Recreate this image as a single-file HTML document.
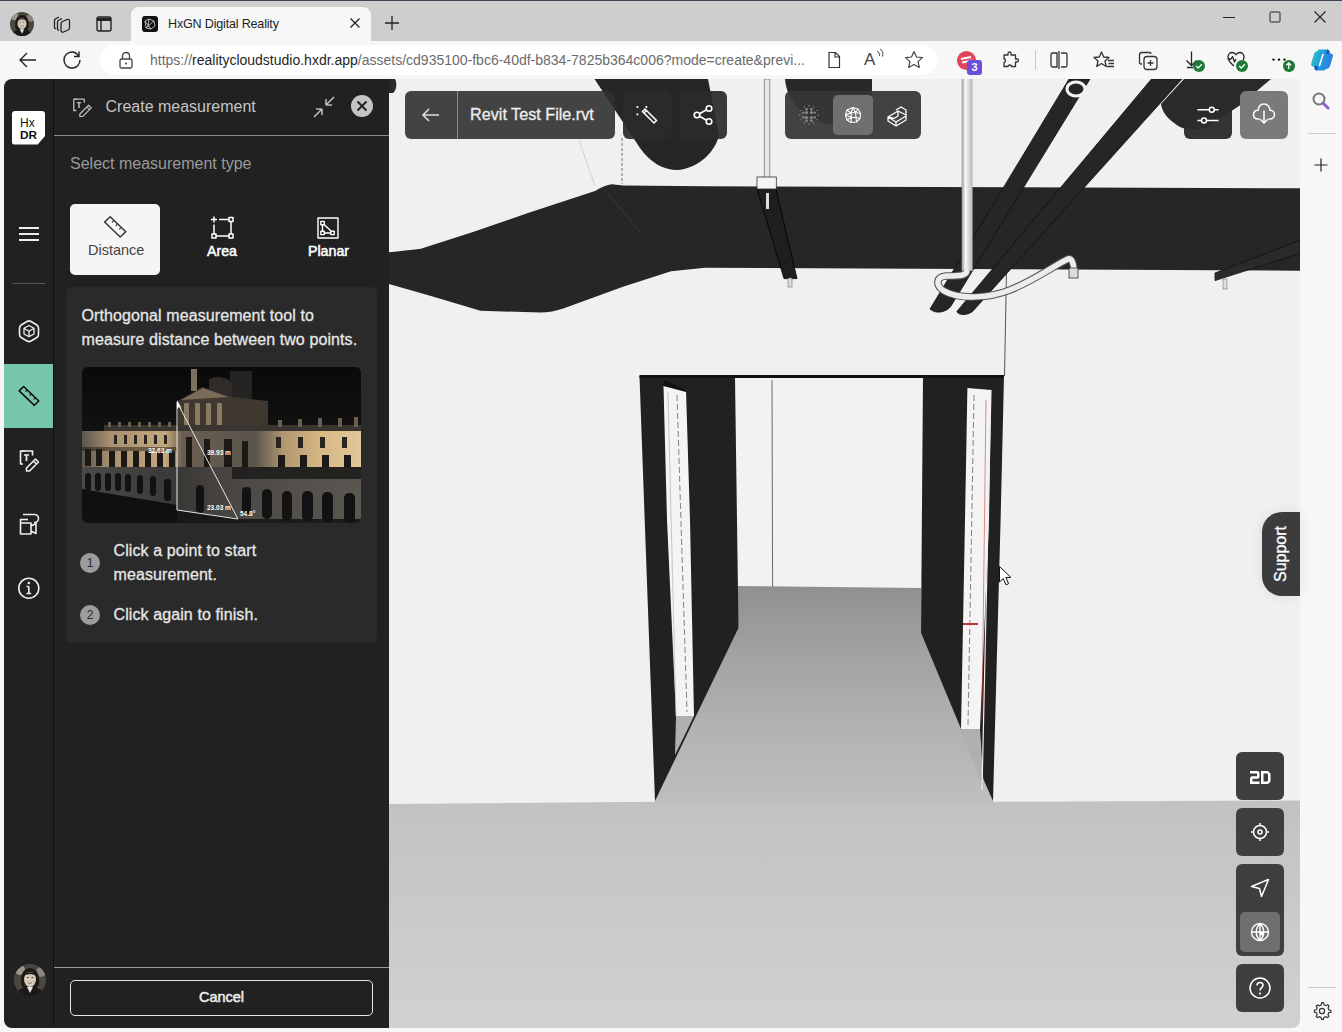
<!DOCTYPE html>
<html><head><meta charset="utf-8">
<style>
*{margin:0;padding:0;box-sizing:border-box}
html,body{width:1342px;height:1032px;overflow:hidden;background:#f7f7f7;font-family:"Liberation Sans",sans-serif}
.a{position:absolute}
#tabbar{left:0;top:0;width:1342px;height:41px;background:#cecece;border-top:1px solid #3b4754}
#tab{left:131px;top:7px;width:240px;height:40px;background:#f7f7f7;border-radius:8px 8px 0 0}
#addr{left:0;top:41px;width:1342px;height:38px;background:#f7f7f7}
#url{left:100px;top:45px;width:837px;height:30px;background:#fff;border-radius:15px}
.ut{font-size:14px;color:#6b6b6b;white-space:nowrap}
#panel{left:4px;top:79px;width:385px;height:949px;background:#212121;border-radius:8px 0 0 8px;overflow:hidden}
#side{left:0;top:0;width:50px;height:948px;border-right:1px solid #111}
#vp{left:389px;top:79px;width:911px;height:949px;background:#f0f0f0;border-radius:0 8px 8px 0;overflow:hidden}
#rs{left:1300px;top:79px;width:42px;height:953px;background:#f7f7f7}
.btn{background:rgba(42,42,42,.92);border-radius:6px}
.w{color:#fff}
.med{-webkit-text-stroke:0.3px currentColor}
</style></head><body>
<div id="tabbar" class="a"></div>
<div id="tab" class="a"></div>
<div id="addr" class="a"></div>
<div id="url" class="a"></div>
<div class="a ut" style="left:150px;top:52px">https://<span style="color:#1f1f1f">realitycloudstudio.hxdr.app</span>/assets/cd935100-fbc6-40df-b834-7825b364c006?mode=create&amp;previ...</div>
<div class="a" style="left:168px;top:16.5px;font-size:12.6px;color:#1f1f1f;letter-spacing:-0.2px">HxGN Digital Reality</div>
<!-- chrome icons -->
<svg class="a" style="left:10px;top:12px" width="24" height="24" viewBox="0 0 32 32"><defs><clipPath id="av2"><circle cx="16" cy="16" r="16"/></clipPath></defs><g clip-path="url(#av2)"><rect width="32" height="32" fill="#4a4640"/><circle cx="6" cy="6" r="5" fill="#9a958e"/><circle cx="27" cy="8" r="5" fill="#8a857e"/><path d="M7,20 C6,10 10,4 16,4 C22,4 26,10 25,20 L23,24 L9,24 Z" fill="#1e1a16"/><ellipse cx="16" cy="15.5" rx="6" ry="7.5" fill="#d6c9ba"/><path d="M9.5,12 C11,7 21,7 22.5,12 C20,9.5 12,9.5 9.5,12 Z" fill="#1e1a16"/><path d="M2,32 C3,25 9,23 16,23 C23,23 29,25 30,32 Z" fill="#1a1816"/><path d="M13,23 L16,29 L19,23 Z" fill="#e8e4de"/><path d="M13,13.5 L14.5,13.5 M17.5,13.5 L19,13.5" stroke="#3a302a" stroke-width="1"/><path d="M14,18.5 C15,19.5 17,19.5 18,18.5" stroke="#8a6a5a" stroke-width=".9" fill="none"/></g></svg>
<svg class="a" style="left:50px;top:12px" width="24" height="24" viewBox="0 0 24 24"><g fill="none" stroke="#222" stroke-width="1.3" stroke-linejoin="round"><path d="M6,17 L4.5,16 L4.5,8.5 C4.5,7.5 5,7 6,6.5 L9,5"/><path d="M9,18.5 L7.5,17.5 L7.5,10 C7.5,9 8,8.5 9,8 L12,6.5"/><path d="M11,11.5 C11,10.5 11.5,10 12.5,9.5 L17,7.5 C18.5,7 19.5,7.5 19.5,9 L19.5,16 C19.5,17 19,17.7 18,18 L13.5,20 C12,20.5 11,20 11,18.5 Z"/></g></svg>
<svg class="a" style="left:92px;top:12px" width="24" height="24" viewBox="0 0 24 24"><g fill="none" stroke="#222" stroke-width="1.4"><rect x="5" y="5" width="14" height="14" rx="2"/><path d="M5,7.5 L19,7.5" stroke-width="3"/><path d="M9,8 L9,19"/></g></svg>
<div class="a" style="left:142px;top:16px;width:16px;height:16px;background:#111;border-radius:3px"></div>
<svg class="a" style="left:142px;top:16px" width="16" height="16" viewBox="0 0 16 16"><g fill="none" stroke="#ddd" stroke-width=".8"><path d="M3,5 L7,3 L12,5 L13,10 L9,13 L4,12 Z M3,5 L9,13 M7,3 L6,11 M12,5 L4,12"/></g></svg>
<svg class="a" style="left:347px;top:15px" width="16" height="16" viewBox="0 0 16 16"><path d="M3.5,3.5 L12.5,12.5 M12.5,3.5 L3.5,12.5" stroke="#222" stroke-width="1.3"/></svg>
<svg class="a" style="left:383px;top:14px" width="18" height="18" viewBox="0 0 18 18"><path d="M9,2 L9,16 M2,9 L16,9" stroke="#222" stroke-width="1.3"/></svg>
<svg class="a" style="left:1220px;top:10px" width="18" height="16" viewBox="0 0 18 16"><path d="M3,7.5 L15,7.5" stroke="#222" stroke-width="1"/></svg>
<svg class="a" style="left:1266px;top:8px" width="18" height="18" viewBox="0 0 18 18"><rect x="4" y="4" width="10" height="10" rx="1" fill="none" stroke="#222" stroke-width="1"/></svg>
<svg class="a" style="left:1311px;top:8px" width="18" height="18" viewBox="0 0 18 18"><path d="M3.5,3.5 L14.5,14.5 M14.5,3.5 L3.5,14.5" stroke="#222" stroke-width="1.1"/></svg>
<svg class="a" style="left:16px;top:48px" width="24" height="24" viewBox="0 0 24 24"><path d="M20,12 L4,12 M11,5 L4,12 L11,19" fill="none" stroke="#222" stroke-width="1.4"/></svg>
<svg class="a" style="left:60px;top:48px" width="24" height="24" viewBox="0 0 24 24"><path d="M18.5,8 C17,5.5 14.5,4 12,4 C7.5,4 4,7.5 4,12 C4,16.5 7.5,20 12,20 C16.5,20 20,16.5 20,12 M19,3.5 L19,8.5 L14,8.5" fill="none" stroke="#222" stroke-width="1.4"/></svg>
<svg class="a" style="left:116px;top:50px" width="20" height="20" viewBox="0 0 20 20"><g fill="none" stroke="#444" stroke-width="1.3"><rect x="4" y="9" width="12" height="9" rx="1.5"/><path d="M6.5,9 L6.5,6 C6.5,4 8,2.5 10,2.5 C12,2.5 13.5,4 13.5,6 L13.5,9"/></g><circle cx="10" cy="13.5" r="1" fill="#444"/></svg>
<svg class="a" style="left:824px;top:50px" width="20" height="20" viewBox="0 0 20 20"><path d="M5,2.5 L11.5,2.5 L15.5,6.5 L15.5,17.5 L5,17.5 Z M11,2.5 L11,7 L15.5,7" fill="none" stroke="#333" stroke-width="1.2"/></svg>
<div class="a" style="left:864px;top:50px;font-size:17px;color:#444">A</div>
<svg class="a" style="left:874px;top:48px" width="12" height="12" viewBox="0 0 12 12"><path d="M3,3 C5,4 6,6 5.5,8 M6,1 C8.5,2.5 9.5,5.5 8.5,8.5" fill="none" stroke="#444" stroke-width="1"/></svg>
<svg class="a" style="left:903px;top:49px" width="22" height="22" viewBox="0 0 22 22"><path d="M11,2.5 L13.5,8 L19.5,8.6 L15,12.6 L16.3,18.5 L11,15.5 L5.7,18.5 L7,12.6 L2.5,8.6 L8.5,8 Z" fill="none" stroke="#444" stroke-width="1.2" stroke-linejoin="round"/></svg>
<div class="a" style="left:957px;top:51px;width:19px;height:19px;border-radius:50%;background:#e0435a"></div>
<svg class="a" style="left:957px;top:51px" width="19" height="19" viewBox="0 0 19 19"><path d="M4,8 L14,6 M5,11.5 L15,9.5" stroke="#fff" stroke-width="1.8"/></svg>
<div class="a" style="left:967px;top:60px;width:15px;height:15px;border-radius:3px;background:#6b4fd8;color:#fff;font-size:11px;font-weight:bold;text-align:center;line-height:15px">3</div>
<svg class="a" style="left:1000px;top:49px" width="22" height="22" viewBox="0 0 22 22"><path d="M8,4.5 C8,2.5 11,2.5 11,4.5 L11,6 L15.5,6 L15.5,10 L17,10 C19,10 19,13 17,13 L15.5,13 L15.5,17.5 L11.5,17.5 C11.5,15.5 8,15.5 8,17.5 L4,17.5 L4,13.5 C6,13.5 6,10 4,10 L4,6 L8,6 Z" fill="none" stroke="#333" stroke-width="1.3" stroke-linejoin="round"/></svg>
<div class="a" style="left:1035px;top:50px;width:1px;height:20px;background:#c8c8c8"></div>
<svg class="a" style="left:1048px;top:49px" width="22" height="22" viewBox="0 0 22 22"><g fill="none" stroke="#333" stroke-width="1.3"><path d="M9,4 L4.5,4 C3.5,4 3,4.5 3,5.5 L3,16.5 C3,17.5 3.5,18 4.5,18 L9,18 Z M13,4 L17.5,4 C18.5,4 19,4.5 19,5.5 L19,16.5 C19,17.5 18.5,18 17.5,18 L13,18"/><path d="M11,2 L11,20"/></g></svg>
<svg class="a" style="left:1092px;top:49px" width="24" height="22" viewBox="0 0 24 22"><g fill="none" stroke="#333" stroke-width="1.3" stroke-linejoin="round"><path d="M9.5,3 L11.7,8 L17,8.5 L13,12 L14.2,17.5 L9.5,14.5 L4.8,17.5 L6,12 L2,8.5 L7.3,8 Z"/><path d="M16,11.5 L22,11.5 M16.5,14.5 L22,14.5 M15,17.5 L22,17.5"/></g></svg>
<svg class="a" style="left:1137px;top:49px" width="24" height="24" viewBox="0 0 24 24"><g fill="none" stroke="#333" stroke-width="1.3"><path d="M5,15 L4,15 C3,15 2.5,14.5 2.5,13.5 L2.5,6 C2.5,4.5 3.5,3.5 5,3.5 L12.5,3.5 C13.5,3.5 14,4 14,5"/><rect x="7" y="7.5" width="13" height="13" rx="3"/><path d="M13.5,11 L13.5,17 M10.5,14 L16.5,14"/></g></svg>
<svg class="a" style="left:1180px;top:48px" width="24" height="24" viewBox="0 0 24 24"><g fill="none" stroke="#222" stroke-width="1.3"><path d="M11.5,3.5 L11.5,17.5 M6.5,12.5 L11.5,17.5 L16.5,12.5 M7,19.5 L13,19.5"/></g></svg>
<div class="a" style="left:1192.5px;top:60px;width:12px;height:12px;border-radius:50%;background:#1d7a38"></div>
<svg class="a" style="left:1192.5px;top:60px" width="12" height="12" viewBox="0 0 12 12"><path d="M3.2,6 L5.2,8 L8.8,4.2" fill="none" stroke="#fff" stroke-width="1.3"/></svg>
<svg class="a" style="left:1224px;top:48px" width="24" height="24" viewBox="0 0 24 24"><path d="M10,18 C7,15.5 4,12.5 4,9 C4,6.2 6,4.5 8.2,4.5 C10,4.5 11.3,5.5 12,6.8 C12.7,5.5 14,4.5 15.8,4.5 C18,4.5 20,6.2 20,9 C20,10 19.7,11 19.2,12 M3.5,11 L7,11 L8.5,8.5 L10.5,14 L12,11" fill="none" stroke="#222" stroke-width="1.3" stroke-linejoin="round"/></svg>
<div class="a" style="left:1236px;top:59.5px;width:12px;height:12px;border-radius:50%;background:#1d7a38"></div>
<svg class="a" style="left:1236px;top:59.5px" width="12" height="12" viewBox="0 0 12 12"><path d="M3.2,6 L5.2,8 L8.8,4.2" fill="none" stroke="#fff" stroke-width="1.3"/></svg>
<svg class="a" style="left:1268px;top:50px" width="24" height="24" viewBox="0 0 24 24"><g fill="#111"><circle cx="5.5" cy="9.6" r="1.2"/><circle cx="11" cy="9.6" r="1.2"/><circle cx="16.5" cy="9.6" r="1.2"/></g></svg>
<div class="a" style="left:1283px;top:60px;width:11.5px;height:11.5px;border-radius:50%;background:#1d7a38"></div>
<svg class="a" style="left:1283px;top:60px" width="11.5" height="11.5" viewBox="0 0 12 12"><path d="M6,9.5 L6,3 M3.5,5.5 L6,3 L8.5,5.5" fill="none" stroke="#fff" stroke-width="1.3"/></svg>
<svg class="a" style="left:1309px;top:48px" width="26" height="24" viewBox="0 0 26 24"><defs><linearGradient id="cpa" x1="0" y1="0" x2="1" y2="0.3"><stop offset="0" stop-color="#3cc8b4"/><stop offset=".5" stop-color="#22a0e0"/><stop offset="1" stop-color="#2a7ee0"/></linearGradient></defs><path d="M9,1.5 L18,1.5 C19.5,1.5 20.5,2.5 20.5,4 L20.5,5.5 L22,5.5 C23.5,5.5 24.3,7 23.8,8.5 L21,18 C20.3,20 19,21 17,21 L16.5,21 L16,22 C15.5,22.5 15,22.5 14.5,22.5 L8,22.5 C6.5,22.5 5.5,21.5 5.5,20 L5.5,18.5 L4,18.5 C2.5,18.5 1.7,17 2.2,15.5 L5,6 C5.7,4 7,3 9,3 Z" fill="url(#cpa)"/><path d="M14,6.5 L10.5,17.5" stroke="#fff" stroke-width="1.6" stroke-linecap="round"/><path d="M18,1.5 C19.5,1.5 20.5,2.5 20.5,4 L20.5,6 L17,6 Z" fill="#1a5aa8"/><path d="M8,22.5 C6.5,22.5 5.5,21.5 5.5,20 L5.5,18 L9,18 Z" fill="#2050c0"/></svg>
<div class="a" style="left:0;top:1027px;width:389px;height:5px;background:#f7f7f7"></div>


<div id="vp" class="a"><svg class="a" style="left:0;top:0" width="911" height="949" viewBox="389 79 911 949">
<defs>
<linearGradient id="fl" x1="0" y1="0" x2="0" y2="1"><stop offset="0" stop-color="#c2c2c2"/><stop offset="1" stop-color="#d1d1d1"/></linearGradient>
<linearGradient id="cf" x1="0" y1="0" x2="0" y2="1"><stop offset="0" stop-color="#8f8f8f"/><stop offset=".2" stop-color="#9c9c9c"/><stop offset=".6" stop-color="#b0b0b0"/><stop offset="1" stop-color="#bfbfbf"/></linearGradient>
<linearGradient id="wp" x1="0" y1="0" x2="1" y2="0"><stop offset="0" stop-color="#9a9a9a"/><stop offset=".35" stop-color="#fafafa"/><stop offset="1" stop-color="#b5b5b5"/></linearGradient>
</defs>
<rect x="389" y="79" width="911" height="949" fill="#f0f0f0"/>
<!-- main floor -->
<path d="M389,804 L655,801.8 L993,801.8 L1300,800.5 L1300,1028 L389,1028 Z" fill="url(#fl)"/>
<!-- corridor back wall -->
<rect x="734" y="378" width="189" height="210" fill="#f2f2f2"/>
<line x1="772" y1="380" x2="772.6" y2="588" stroke="#6a6a6a" stroke-width="1"/>
<!-- corridor floor -->
<path d="M734,586 L921,588 L921,633 L961,729 L994,803 L654,803 L738.5,628 Z" fill="url(#cf)"/>
<!-- left wall: outer dark -->
<path d="M639.5,376 L735,378 L738.5,628 L655,801 L644.7,520 Z" fill="#212121"/>
<!-- left door white strip -->
<path d="M663.5,386 L686,390 L690,520 L694,716 L676,716 L667,520 Z" fill="#f4f4f4"/>
<path d="M663.5,386 L663.5,380 L686,390 L686,392 Z" fill="#111"/>
<line x1="677" y1="395" x2="687" y2="712" stroke="#666" stroke-width="0.8" stroke-dasharray="6,3"/>
<line x1="668" y1="392" x2="676" y2="716" stroke="#bbb" stroke-width="0.8"/>
<!-- left door bottom: floor seen through -->
<path d="M676,716 L694,716 L675,755 Z" fill="#b0b0b0"/>
<!-- right wall dark -->
<path d="M923,378 L1004,376 L1000.6,520 L993,801 L961,729 L921,633 Z" fill="#212121"/>
<!-- right door white strip -->
<path d="M967.4,388 L991,390 L989,520 L980,729 L961,729 L965,520 Z" fill="#f4f4f4"/>
<line x1="974" y1="395" x2="968" y2="725" stroke="#666" stroke-width="0.8" stroke-dasharray="6,3"/>
<line x1="986" y1="400" x2="982" y2="720" stroke="#c33" stroke-width="0.8" opacity=".7"/>
<path d="M961,729 L980,729 L984,790 Z" fill="#b0b0b0"/>
<line x1="963" y1="624" x2="978" y2="624" stroke="#c0392b" stroke-width="2"/>
<line x1="991" y1="390" x2="982" y2="790" stroke="#f0f0f0" stroke-width="1.2"/>
<!-- top beam line -->
<path d="M639.5,375 L1004,375 L1004,378 L639.5,378 Z" fill="#111"/>
<line x1="1006.5" y1="270" x2="1004.5" y2="376" stroke="#555" stroke-width="1"/>
<!-- main duct -->
<path d="M389,252.3 C400,251 410,250 420.8,248.7 L473,232 L528,213 L595,191 C600,188 606,185 611.5,184.3 L623.4,185.5 L705,186.2 L1300,188.3 L1300,270.7 L705,267.8 L671,271.3 L623,286.8 L564,308.3 C556,311 548,312.6 540,312.6 L480.4,310.7 L432.7,296.4 L389,284 Z" fill="#262626"/>
<line x1="579" y1="140" x2="595" y2="186" stroke="#bbb" stroke-width="0.6"/>
<line x1="622" y1="138" x2="622" y2="184" stroke="#555" stroke-width="0.8" stroke-dasharray="3,2"/>
<line x1="605" y1="190" x2="640" y2="232" stroke="#444" stroke-width="0.6"/>
<!-- round duct blob -->
<path d="M594.5,79 L640,148 C650,162 662,170 678,170 C700,168 716,150 719,135 L708,79 Z" fill="#262626"/>
<path d="M389,79 L395,79 C397,82 397,90 393,93 L389,93 Z" fill="#2a2a2a"/>
<!-- second blob -->
<path d="M785,79 C787,100 800,118 828,124 C850,124 866,112 872,95 L872,79 Z" fill="#282828"/>
<!-- rod and hanger -->
<rect x="764.3" y="79" width="5.5" height="99" fill="#e8e8e8" stroke="#777" stroke-width="0.8"/>
<path d="M757,189 L776,189 L797,278.6 L784,278.6 Z" fill="#1e1e1e" stroke="#000" stroke-width="0.8"/>
<rect x="757" y="177" width="19.3" height="12" fill="#f4f4f4" stroke="#333" stroke-width="0.8"/>
<rect x="766" y="193" width="3" height="16" fill="#ddd"/>
<rect x="788" y="278" width="4" height="9" fill="#ddd" stroke="#555" stroke-width="0.5"/>
<!-- right pipes -->
<path d="M1069,79 L1090,79 L951,306 C946,313 935,314 930,309 Z" fill="#262626" stroke="#111" stroke-width="0.8"/>
<path d="M1151.5,79 L1182,79 L972.6,311.4 C966,316 958,315 956.9,311.4 Z" fill="#262626" stroke="#111" stroke-width="0.8"/>
<ellipse cx="1076" cy="89" rx="9" ry="7" fill="none" stroke="#f4f4f4" stroke-width="3"/>
<!-- blob behind settings -->
<path d="M1184,79 L1271,79 L1239,106 L1210,125 C1200,131 1190,131 1180,127 C1168,120 1162,112 1161,104 Z" fill="#2a2a2a"/>
<!-- vertical white pipe -->
<rect x="961.7" y="79" width="10.9" height="192" fill="url(#wp)"/>
<path d="M967,270 C967,276 960,276 946,276 C935,277 936,286 944,291 C960,300 990,298 1010,290 C1035,280 1055,265 1068,259 C1072,258 1074,264 1074,272" fill="none" stroke="#555" stroke-width="7.5"/>
<path d="M967,270 C967,276 960,276 946,276 C935,277 936,286 944,291 C960,300 990,298 1010,290 C1035,280 1055,265 1068,259 C1072,258 1074,264 1074,272" fill="none" stroke="#ececec" stroke-width="5.5"/>
<rect x="1069" y="268" width="9" height="10" fill="#ddd" stroke="#333" stroke-width="0.8"/>
<!-- right small beam -->
<path d="M1215,273 L1300,240.3 L1300,253.4 L1215,280.6 Z" fill="#2a2a2a" stroke="#111" stroke-width="0.8"/>
<rect x="1223" y="279" width="4" height="10" fill="#ddd" stroke="#666" stroke-width="0.5"/>
</svg></div>
<div id="rs" class="a"></div>
<!-- right browser sidebar -->
<svg class="a" style="left:1310px;top:90px" width="22" height="22" viewBox="0 0 22 22"><circle cx="9" cy="9" r="5.5" fill="none" stroke="#777" stroke-width="2"/><path d="M13,13 L18,18" stroke="#8a5fd0" stroke-width="3" stroke-linecap="round"/></svg>
<div class="a" style="left:1308px;top:133px;width:28px;height:1px;background:#ccc"></div>
<svg class="a" style="left:1313px;top:157px" width="16" height="16" viewBox="0 0 16 16"><path d="M8,1.5 L8,14.5 M1.5,8 L14.5,8" stroke="#222" stroke-width="1.2"/></svg>
<div class="a" style="left:1308px;top:987px;width:28px;height:1px;background:#ccc"></div>
<svg class="a" style="left:1312px;top:1001px" width="20" height="20" viewBox="0 0 20 20"><g fill="none" stroke="#333" stroke-width="1.2"><circle cx="10" cy="10" r="2.6"/><path d="M8.6,2.5 L11.4,2.5 L11.9,4.8 L13.6,5.6 L15.6,4.4 L17.5,6.4 L16.3,8.4 L16.9,10.2 L19.3,10.7 L19.1,13.4 L16.8,13.9 L15.9,15.6 L16.9,17.8 L14.7,19.3 L12.9,17.7 L11,18.2 L10.3,20.5" transform="translate(-.3,-1.2) scale(.95)" stroke="none"/><path d="M10,2.8 L11.6,3 L12.2,5 L13.9,5.9 L15.8,5 L17,6.3 L16.1,8.2 L16.8,10 L18.8,10.6 L18.8,12.4 L16.8,13 L16,14.7 L16.9,16.6 L15.6,17.8 L13.8,16.9 L12,17.7 L11.4,19.6 L9.6,19.6 L9,17.6 L7.3,16.9 L5.4,17.8 L4.2,16.5 L5.1,14.6 L4.4,12.9 L2.4,12.3 L2.4,10.5 L4.4,9.9 L5.2,8.2 L4.3,6.3 L5.6,5.1 L7.4,6 L9.1,5.2 L9.7,3.1 Z" transform="translate(0,-1.2)"/></g></svg>

<!-- viewport overlays -->
<div class="a btn" style="left:405px;top:91px;width:210px;height:48px;background:rgba(48,48,48,.9)"></div>
<div class="a" style="left:457px;top:91px;width:1px;height:48px;background:#8a8a8a"></div>
<svg class="a" style="left:419px;top:103px" width="24" height="24" viewBox="0 0 24 24"><path d="M20,12 L4,12 M10,6 L4,12 L10,18" fill="none" stroke="#ddd" stroke-width="1.6"/></svg>
<div class="a med" style="left:470px;top:105px;font-size:16.2px;color:#eee;white-space:nowrap">Revit Test File.rvt</div>
<div class="a btn" style="left:623px;top:91px;width:48px;height:48px"></div>
<svg class="a" style="left:635px;top:103px" width="24" height="24" viewBox="0 0 24 24"><g fill="none" stroke="#fff" stroke-width="1.5"><path d="M7.5,8.5 L10,6 L21.5,17.5 L19,20 Z M9,10 L11.5,7.5"/></g><g fill="#fff"><rect x="1.5" y="3" width="1.8" height="1.8"/><rect x="10.5" y="3" width="1.8" height="1.8"/><rect x="1.5" y="10.5" width="1.8" height="1.8"/></g></svg>
<div class="a btn" style="left:679px;top:91px;width:48px;height:48px"></div>
<svg class="a" style="left:691px;top:103px" width="24" height="24" viewBox="0 0 24 24"><g fill="none" stroke="#fff" stroke-width="1.6"><circle cx="18" cy="5.5" r="2.8"/><circle cx="6" cy="12" r="2.8"/><circle cx="18" cy="18.5" r="2.8"/><path d="M8.5,10.7 L15.5,6.8 M8.5,13.3 L15.5,17.2"/></g></svg>

<div class="a btn" style="left:785px;top:91px;width:136px;height:48px;background:rgba(54,54,54,.94)"></div>
<div class="a" style="left:833px;top:95px;width:40px;height:40px;background:#6f6f6f;border-radius:5px"></div>
<svg class="a" style="left:797px;top:103px" width="24" height="24" viewBox="0 0 24 24"><g fill="#8c8c8c"><circle cx="9.5" cy="9.5" r="1.5"/><circle cx="14.5" cy="9.5" r="1.5"/><circle cx="9.5" cy="14.5" r="1.5"/><circle cx="14.5" cy="14.5" r="1.5"/><circle cx="17.7" cy="14.4" r="1.2"/><circle cx="14.4" cy="17.7" r="1.2"/><circle cx="9.6" cy="17.7" r="1.2"/><circle cx="6.3" cy="14.4" r="1.2"/><circle cx="6.3" cy="9.6" r="1.2"/><circle cx="9.6" cy="6.3" r="1.2"/><circle cx="14.4" cy="6.3" r="1.2"/><circle cx="17.7" cy="9.6" r="1.2"/><circle cx="21.2" cy="12.0" r=".7"/><circle cx="20.0" cy="16.6" r=".7"/><circle cx="16.6" cy="20.0" r=".7"/><circle cx="12.0" cy="21.2" r=".7"/><circle cx="7.4" cy="20.0" r=".7"/><circle cx="4.0" cy="16.6" r=".7"/><circle cx="2.8" cy="12.0" r=".7"/><circle cx="4.0" cy="7.4" r=".7"/><circle cx="7.4" cy="4.0" r=".7"/><circle cx="12.0" cy="2.8" r=".7"/><circle cx="16.6" cy="4.0" r=".7"/><circle cx="20.0" cy="7.4" r=".7"/></g></svg>
<svg class="a" style="left:841px;top:103px" width="24" height="24" viewBox="0 0 24 24"><g fill="none" stroke="#fff" stroke-width="1.1" stroke-linejoin="round"><path d="M12,4.5 L17,6 L19.5,10.5 L19,15.5 L15.5,19 L10,19.5 L6,17 L4.5,12 L6,7 Z"/><path d="M12,4.5 L10,10 L6,7 M10,10 L4.5,12 M10,10 L14.5,9.5 L17,6 M14.5,9.5 L19.5,10.5 M14.5,9.5 L15,14.5 L19,15.5 M15,14.5 L10.5,14.5 L10,10 M10.5,14.5 L6,17 M10.5,14.5 L10,19.5 M15,14.5 L15.5,19 M12,4.5 L14.5,9.5 M10.5,14.5 L4.5,12"/></g></svg>
<svg class="a" style="left:884px;top:102px" width="26" height="26" viewBox="0 0 26 26"><g fill="none" stroke="#fff" stroke-width="1.3" stroke-linejoin="round"><path d="M4,15 L14,9 L22,13 L22,18 L12,24 L4,19 Z M4,15 L12,20 L22,14 M12,20 L12,24"/><path d="M12,8 L17,5 L22,8 L22,13 M14,9 L14,14 L10,16.5 L4,15"/></g></svg>

<div class="a btn" style="left:1184px;top:91px;width:48px;height:48px;background:rgba(44,44,44,.96)"></div>
<svg class="a" style="left:1196px;top:103px" width="24" height="24" viewBox="0 0 24 24"><g fill="none" stroke="#fff" stroke-width="1.5"><path d="M1.5,6.8 L13.3,6.8 M18.3,6.8 L22.5,6.8 M1.5,17.5 L5.5,17.5 M10.5,17.5 L22.5,17.5"/><circle cx="15.8" cy="6.8" r="2.5"/><circle cx="8" cy="17.5" r="2.5"/></g></svg>
<div class="a" style="left:1240px;top:91px;width:48px;height:48px;background:#7a7a7a;border-radius:6px"></div>
<svg class="a" style="left:1251px;top:101px" width="26" height="26" viewBox="0 0 26 26"><g fill="none" stroke="#fff" stroke-width="1.5" stroke-linecap="round"><path d="M8,18 L7,18 C4,18 2.5,16 2.5,13.5 C2.5,11 4.5,9 7,9.3 C7.5,5.5 10,3 13,3 C16.5,3 19,6 19,9.3 C21.5,9.3 23.5,11 23.5,13.5 C23.5,16 21.5,18 19,18 L18,18"/><path d="M13,10 L13,22 M9.5,18.5 L13,22 L16.5,18.5"/></g></svg>

<svg class="a" style="left:998px;top:565px" width="16" height="22" viewBox="0 0 16 22"><path d="M1.5,1.5 L1.5,17 L5.2,13.6 L8,19.8 L10.6,18.7 L7.9,12.6 L12.8,12.4 Z" fill="#fff" stroke="#111" stroke-width="1" stroke-linejoin="round"/></svg>
<div class="a" style="left:1262px;top:512px;width:38px;height:84px;background:#3c3c3c;border-radius:20px 0 0 20px;box-shadow:0 0 14px rgba(0,0,0,.08)"></div>
<div class="a" style="left:1281px;top:553.5px;width:0;height:0"><div class="a" style="left:-35px;top:-9px;width:70px;height:18px;transform:rotate(-90deg);color:#fff;font-size:16px;line-height:18px;text-align:center;white-space:nowrap;-webkit-text-stroke:0.3px #fff">Support</div></div>

<div class="a btn" style="left:1236px;top:752px;width:48px;height:48px;background:#3e3e3e"></div>
<svg class="a" style="left:1250px;top:770.5px" width="21" height="13" viewBox="0 0 21 13"><g fill="#fff"><path d="M0,0 L8,0 L9.5,1.5 L9.5,6.25 L8,7.75 L2.5,7.75 L2.5,10.5 L9.5,10.5 L9.5,13 L0,13 L0,6.75 L1.5,5.25 L7,5.25 L7,2.5 L0,2.5 Z"/><path d="M11,0 L18,0 L20.5,2.5 L20.5,10.5 L18,13 L11,13 Z M13.5,2.5 L13.5,10.5 L17.2,10.5 L18,9.7 L18,3.3 L17.2,2.5 Z" fill-rule="evenodd"/></g></svg>
<div class="a btn" style="left:1236px;top:808px;width:48px;height:48px;background:#3e3e3e"></div>
<svg class="a" style="left:1248px;top:820px" width="24" height="24" viewBox="0 0 24 24"><g fill="none" stroke="#fff" stroke-width="1.5"><circle cx="12" cy="12" r="6.5"/><circle cx="12" cy="12" r="2"/><path d="M12,3 L12,5.5 M12,18.5 L12,21 M3,12 L5.5,12 M18.5,12 L21,12"/></g></svg>
<div class="a btn" style="left:1236px;top:864px;width:48px;height:92px;background:#3e3e3e"></div>
<svg class="a" style="left:1248px;top:876px" width="24" height="24" viewBox="0 0 24 24"><path d="M3.5,10.5 L20.5,3.5 L13.5,20.5 L11.5,12.5 Z" fill="none" stroke="#fff" stroke-width="1.5" stroke-linejoin="round"/></svg>
<div class="a" style="left:1240px;top:912px;width:40px;height:40px;background:#6f6f6f;border-radius:5px"></div>
<svg class="a" style="left:1248px;top:920px" width="24" height="24" viewBox="0 0 24 24"><g fill="none" stroke="#fff" stroke-width="1.4"><circle cx="12" cy="12" r="8.5"/><path d="M3.5,12 L20.5,12 M12,3.5 L12,20.5 M12,3.5 C7,8 7,16 12,20.5 M12,3.5 C17,8 17,16 12,20.5"/></g><circle cx="13.5" cy="13.5" r="2" fill="#fff"/></svg>
<div class="a btn" style="left:1236px;top:964px;width:48px;height:48px;background:#3e3e3e"></div>
<svg class="a" style="left:1248px;top:976px" width="24" height="24" viewBox="0 0 24 24"><g fill="none" stroke="#fff" stroke-width="1.5"><circle cx="12" cy="12" r="10"/><path d="M9,9.5 C9,7.5 10.5,6.5 12,6.5 C13.8,6.5 15,7.7 15,9.3 C15,11.5 12,11.8 12,14.5"/></g><circle cx="12" cy="17.5" r="1.1" fill="#fff"/></svg>


<div id="panel" class="a">
  <div id="side" class="a">
    <div class="a" style="left:8px;top:31.5px;width:33px;height:34px;background:#fff;border-radius:3px;clip-path:polygon(0 0,100% 0,100% 75%,78% 100%,0 100%)"></div>
    <div class="a" style="left:16px;top:38px;font-size:12px;line-height:12px;color:#111;letter-spacing:0px">Hx</div>
    <div class="a" style="left:16px;top:49.5px;font-size:11.8px;line-height:12px;color:#111;font-weight:bold">DR</div>
    <!-- hamburger -->
    <div class="a" style="left:15px;top:148px;width:20px;height:2px;background:#eee"></div>
    <div class="a" style="left:15px;top:154px;width:20px;height:2px;background:#eee"></div>
    <div class="a" style="left:15px;top:160px;width:20px;height:2px;background:#eee"></div>
    <div class="a" style="left:8px;top:204px;width:33px;height:1px;background:#555"></div>
    <!-- active -->
    <div class="a" style="left:0;top:285px;width:49px;height:64px;background:#76c6ac"></div>
    <svg class="a" style="left:0;top:0" width="49" height="948" viewBox="4 79 49 948">
      <g fill="none" stroke="#eee" stroke-width="1.6" stroke-linejoin="round">
        <!-- cube in hexagon -->
        <path d="M27,321.5 C28.2,320.8 29.8,320.8 31,321.5 L36.5,324.7 C37.7,325.4 38.5,326.7 38.5,328.1 L38.5,334.4 C38.5,335.8 37.7,337.1 36.5,337.8 L31,341 C29.8,341.7 28.2,341.7 27,341 L21.5,337.8 C20.3,337.1 19.5,335.8 19.5,334.4 L19.5,328.1 C19.5,326.7 20.3,325.4 21.5,324.7 Z"/>
        <path d="M29,325.5 L34,328.3 L34,334 L29,336.8 L24,334 L24,328.3 Z M24.3,328.5 L29,331.2 L33.7,328.5 M29,331.2 L29,336.5" stroke-width="1.3"/>
        <!-- ruler (active) -->
        <path d="M23.6,386.5 L19.2,390.9 L34.4,405.3 L38.8,401 Z" stroke="#111" stroke-width="1.6"/>
        <path d="M27.2,390 L25.6,391.6 M31.3,393.9 L29.7,395.5 M35.4,397.8 L33.8,399.4" stroke="#111" stroke-width="1.3"/>
        <!-- text edit -->
        <path d="M24.5,451 L20.5,451 L20.5,464 L23,464"/>
        <path d="M21.5,451 L32.5,451 L32.5,455.5"/>
        <path d="M24,455 L29,455 M26.5,455 L26.5,461" stroke-width="1.7"/>
        <path d="M26.5,468 L35.5,459 L38.5,462 L29.5,471 L26.5,471 Z M33.5,461 L36.5,464"/>
        <!-- media -->
        <path d="M23,514.5 L34.5,514.5 C36.7,514.5 38.5,516.3 38.5,518.5 C38.5,520.7 36.7,522.5 34.5,522.5 L34,522.5"/>
        <path d="M20.5,519.5 L20.5,534 L31,534 L31,523 L20.5,523 Z M31,526 L36,523.5 L36,533.5 L31,531"/>
        <path d="M20.5,519.5 L28,519.5"/>
        <!-- info -->
        <circle cx="28.8" cy="588.2" r="10"/>
        <path d="M28.8,586.5 L28.8,593.5 M26.5,586.5 L28.8,586.5 M26.5,593.5 L31.2,593.5" stroke-width="1.6"/>
      </g>
      <circle cx="28.8" cy="583" r="1.3" fill="#eee"/>
    </svg>
    <!-- avatar -->
    <svg class="a" style="left:9.5px;top:885px" width="32" height="32" viewBox="0 0 32 32"><defs><clipPath id="av1"><circle cx="16" cy="16" r="16"/></clipPath></defs><g clip-path="url(#av1)"><rect width="32" height="32" fill="#4a4640"/><circle cx="6" cy="6" r="5" fill="#9a958e"/><circle cx="27" cy="8" r="5" fill="#8a857e"/><path d="M7,20 C6,10 10,4 16,4 C22,4 26,10 25,20 L23,24 L9,24 Z" fill="#1e1a16"/><ellipse cx="16" cy="15.5" rx="6" ry="7.5" fill="#d6c9ba"/><path d="M9.5,12 C11,7 21,7 22.5,12 C20,9.5 12,9.5 9.5,12 Z" fill="#1e1a16"/><path d="M2,32 C3,25 9,23 16,23 C23,23 29,25 30,32 Z" fill="#1a1816"/><path d="M13,23 L16,29 L19,23 Z" fill="#e8e4de"/><path d="M13,13.5 L14.5,13.5 M17.5,13.5 L19,13.5" stroke="#3a302a" stroke-width="1"/><path d="M14,18.5 C15,19.5 17,19.5 18,18.5" stroke="#8a6a5a" stroke-width=".9" fill="none"/></g></svg>
  </div>
  <!-- header -->
  <svg class="a" style="left:68px;top:18px" width="21" height="20" viewBox="0 0 24 22">
    <g fill="none" stroke="#bbb" stroke-width="1.5" stroke-linejoin="round">
      <path d="M6,2 L2,2 L2,15 L5,15"/>
      <path d="M3,2 L14,2 L14,6"/>
      <path d="M5.5,6 L10.5,6 M8,6 L8,12" stroke-width="1.7"/>
      <path d="M9,19 L19,9 L22,12 L12,22 L9,22 Z M17,11 L20,14"/>
    </g>
  </svg>
  <div class="a" style="left:101.5px;top:18.5px;font-size:16px;color:#c4c4c4;white-space:nowrap">Create measurement</div>
  <svg class="a" style="left:308px;top:16px" width="24" height="24" viewBox="0 0 24 24">
    <g fill="none" stroke="#bbb" stroke-width="1.6">
      <path d="M14,10 L22,2 M14,10 L14,4 M14,10 L20,10"/>
      <path d="M10,14 L2,22 M10,14 L10,20 M10,14 L4,14"/>
    </g>
  </svg>
  <div class="a" style="left:347px;top:16px;width:22px;height:22px;border-radius:50%;background:#c4c4c4"></div>
  <svg class="a" style="left:347px;top:16px" width="22" height="22" viewBox="0 0 22 22"><path d="M6.5,6.5 L15.5,15.5 M15.5,6.5 L6.5,15.5" stroke="#222" stroke-width="2"/></svg>
  <div class="a" style="left:50px;top:56px;width:335px;height:1px;background:#8a8a8a"></div>
  <div class="a" style="left:66px;top:75.7px;font-size:16px;color:#9a9a9a;white-space:nowrap">Select measurement type</div>
  <!-- type buttons -->
  <div class="a" style="left:66px;top:125px;width:90px;height:71px;background:#f5f5f5;border-radius:5px"></div>
  <svg class="a" style="left:96px;top:133px" width="260" height="30" viewBox="0 0 260 30">
    <g fill="none" stroke-linejoin="round">
      <path d="M4.6,10 L10.2,4.8 L25.8,19.8 L20.2,25 Z" stroke="#333" stroke-width="1.5"/>
      <path d="M13.6,8.8 L12,10.4 M17.2,12.3 L15.6,13.9 M20.8,15.8 L19.2,17.4" stroke="#333" stroke-width="1.2"/>
      <g stroke="#fff" stroke-width="1.5">
        <g transform="translate(1.5,1)"><path d="M112.5,3.5 L112.5,9.5 M109.5,6.5 L115.5,6.5"/>
        <path d="M117.5,6.5 L127.5,6.5 M112.5,11.5 L112.5,21 M114.5,23 L127.5,23 M129.5,8.5 L129.5,21"/>
        <rect x="127.5" y="4.5" width="4" height="4"/>
        <rect x="110.5" y="21" width="4" height="4"/>
        <rect x="127.5" y="21" width="4" height="4"/></g><g transform="translate(4,0.5) translate(224,15.5) scale(.95) translate(-224,-15.5)">
        <rect x="213.5" y="5" width="21" height="21"/>
        <rect x="216.5" y="8.5" width="3.5" height="3.5"/>
        <rect x="216.5" y="19" width="3.5" height="3.5"/>
        <rect x="227" y="19" width="3.5" height="3.5"/>
        <path d="M218.2,12 L218.2,19 M220,20.7 L227,20.7 M219.5,11.5 L227.5,19"/></g>
      </g>
    </g>
  </svg>
  <div class="a" style="left:84px;top:163.3px;font-size:14.5px;color:#444;white-space:nowrap">Distance</div>
  <div class="a med" style="left:203px;top:163.5px;font-size:14.2px;color:#fff;white-space:nowrap;-webkit-text-stroke:0.5px #fff">Area</div>
  <div class="a med" style="left:304px;top:163.5px;font-size:14.2px;color:#fff;white-space:nowrap;-webkit-text-stroke:0.5px #fff">Planar</div>
  <!-- card -->
  <div class="a" style="left:62px;top:208px;width:311px;height:356px;background:#2a2a2a;border-radius:6px"></div>
  <div class="a med" style="left:77.5px;top:224.5px;font-size:16px;line-height:24px;color:#e6e6e6;white-space:nowrap;letter-spacing:0.1px">Orthogonal measurement tool to<br>measure distance between two points.</div>
  <div id="img" class="a" style="left:78px;top:288px;width:279px;height:156px;border-radius:6px;overflow:hidden;background:#111">
<svg width="279" height="156" viewBox="0 0 279 156">
<defs>
<linearGradient id="sky" x1="0" y1="0" x2="0" y2="1"><stop offset="0" stop-color="#0a0a0a"/><stop offset="1" stop-color="#1c1c1c"/></linearGradient>
<linearGradient id="wing" x1="0" y1="0" x2="1" y2="0"><stop offset="0" stop-color="#5a554e"/><stop offset=".1" stop-color="#a89070"/><stop offset=".3" stop-color="#c4a77c"/><stop offset=".36" stop-color="#6a5e50"/><stop offset=".62" stop-color="#5a544c"/><stop offset=".72" stop-color="#b09670"/><stop offset=".85" stop-color="#d6b784"/><stop offset="1" stop-color="#e2c79a"/></linearGradient>
<linearGradient id="arc" x1="0" y1="0" x2="1" y2="0"><stop offset="0" stop-color="#4a4a4a"/><stop offset=".35" stop-color="#3a3836"/><stop offset=".6" stop-color="#4e4a46"/><stop offset="1" stop-color="#5a5650"/></linearGradient>
</defs>
<rect width="279" height="156" fill="url(#sky)"/>
<!-- pavilion -->
<rect x="148" y="4" width="22" height="30" fill="#262422"/>
<path d="M127,12 C135,8 145,10 150,16 L150,30 L127,30 Z" fill="#2e2b28"/>
<path d="M96,34 L120,20 L150,30 L186,34 L186,62 L96,62 Z" fill="#3e3830"/>
<path d="M99,33 L121,21 L146,30 Z" fill="#7a6c58"/>
<rect x="109" y="2" width="6" height="22" fill="#7a7060"/>
<g fill="#8a7a62"><rect x="102" y="36" width="5" height="26"/><rect x="113" y="36" width="5" height="26"/><rect x="124" y="36" width="5" height="26"/><rect x="135" y="36" width="5" height="26"/></g>
<!-- balustrade -->
<rect x="22" y="58" width="257" height="6" fill="#3a3530"/>
<g fill="#6a5e4e"><rect x="26" y="55" width="3" height="5"/><rect x="36" y="55" width="3" height="5"/><rect x="46" y="55" width="3" height="5"/><rect x="56" y="55" width="3" height="5"/><rect x="66" y="55" width="3" height="5"/><rect x="76" y="55" width="3" height="5"/><rect x="86" y="55" width="3" height="5"/><rect x="196" y="53" width="4" height="7"/><rect x="216" y="52" width="4" height="8"/><rect x="236" y="51" width="4" height="9"/><rect x="256" y="51" width="4" height="9"/><rect x="272" y="50" width="4" height="10"/></g>
<!-- upper floor -->
<rect x="0" y="64" width="279" height="42" fill="url(#wing)"/>
<g fill="#2a2420"><rect x="32" y="68" width="3" height="9"/><rect x="42" y="68" width="3" height="9"/><rect x="52" y="68" width="3" height="9"/><rect x="62" y="68" width="3" height="9"/><rect x="72" y="68" width="3" height="9"/><rect x="82" y="68" width="3" height="9"/><rect x="194" y="70" width="5" height="11"/><rect x="216" y="70" width="5" height="11"/><rect x="238" y="70" width="5" height="11"/><rect x="260" y="70" width="5" height="11"/></g>
<g fill="#1c1816"><rect x="0" y="80" width="95" height="4" opacity=".5"/><rect x="3" y="82" width="6" height="17"/><rect x="14" y="82" width="6" height="17"/><rect x="27" y="84" width="6" height="16"/><rect x="39" y="84" width="6" height="16"/><rect x="51" y="84" width="6" height="16"/><rect x="63" y="84" width="6" height="16"/><rect x="75" y="84" width="6" height="16"/><rect x="87" y="84" width="6" height="16"/><rect x="196" y="88" width="7" height="18"/><rect x="218" y="88" width="7" height="18"/><rect x="240" y="88" width="7" height="18"/><rect x="262" y="88" width="7" height="18"/><rect x="104" y="70" width="6" height="40"/><rect x="122" y="72" width="6" height="40"/><rect x="142" y="72" width="8" height="40"/><rect x="160" y="74" width="6" height="36"/></g>
<rect x="150" y="100" width="129" height="12" fill="#1e1c1a"/>
<!-- lower arcade -->
<rect x="0" y="100" width="279" height="52" fill="url(#arc)"/>
<rect x="150" y="100" width="129" height="12" fill="#242220"/>
<g fill="#121212"><rect x="3" y="106" width="6" height="18" rx="3"/><rect x="13" y="106" width="6" height="18" rx="3"/><rect x="23" y="106" width="6" height="18" rx="3"/><rect x="33" y="106" width="6" height="18" rx="3"/><rect x="43" y="107" width="6" height="18" rx="3"/><rect x="55" y="108" width="6" height="19" rx="3"/><rect x="68" y="109" width="6" height="20" rx="3"/><rect x="82" y="112" width="7" height="22" rx="3"/><rect x="114" y="118" width="8" height="28" rx="4"/><rect x="160" y="120" width="9" height="28" rx="4"/><rect x="180" y="122" width="10" height="30" rx="5"/><rect x="200" y="124" width="10" height="30" rx="5"/><rect x="220" y="124" width="11" height="30" rx="5"/><rect x="240" y="125" width="11" height="30" rx="5"/><rect x="262" y="126" width="11" height="30" rx="5"/></g>
<path d="M0,122 L95,138 L95,156 L0,156 Z" fill="#101010"/>
<path d="M95,143 L160,152 L160,156 L95,156 Z" fill="#181818"/>
<!-- measure -->
<g stroke="#e8e8e8" stroke-width="1" fill="none"><path d="M95,35 L95,143 L156,152 Z"/></g>
<path d="M95,33 L95,42 L97.5,39.5 L100,42 Z" fill="#fff"/>
<g font-family="Liberation Sans" font-size="6.5" font-weight="bold" fill="#fff"><text x="66" y="86">32.62 m</text><text x="125" y="88">39.93 m</text><text x="125" y="143">23.03 m</text><text x="158" y="149">54.8°</text></g>
</svg></div>
  <div class="a" style="left:76px;top:474px;width:20px;height:20px;border-radius:50%;background:#9c9c9c;color:#2a2a2a;font-size:12px;text-align:center;line-height:20px">1</div>
  <div class="a med" style="left:109.5px;top:460px;font-size:16px;line-height:24px;color:#e6e6e6;white-space:nowrap;letter-spacing:0.1px">Click a point to start<br>measurement.</div>
  <div class="a" style="left:76px;top:526px;width:20px;height:20px;border-radius:50%;background:#9c9c9c;color:#2a2a2a;font-size:12px;text-align:center;line-height:20px">2</div>
  <div class="a med" style="left:109.5px;top:524px;font-size:16px;line-height:24px;color:#e6e6e6;white-space:nowrap;letter-spacing:0.1px">Click again to finish.</div>
  <!-- footer -->
  <div class="a" style="left:50px;top:888px;width:335px;height:1px;background:#9a9a9a"></div>
  <div class="a" style="left:66px;top:901px;width:303px;height:36px;border:1px solid #e8e8e8;border-radius:5px;color:#eee;font-size:14.5px;text-align:center;line-height:32px;-webkit-text-stroke:0.5px #eee">Cancel</div>
</div>
</body></html>
